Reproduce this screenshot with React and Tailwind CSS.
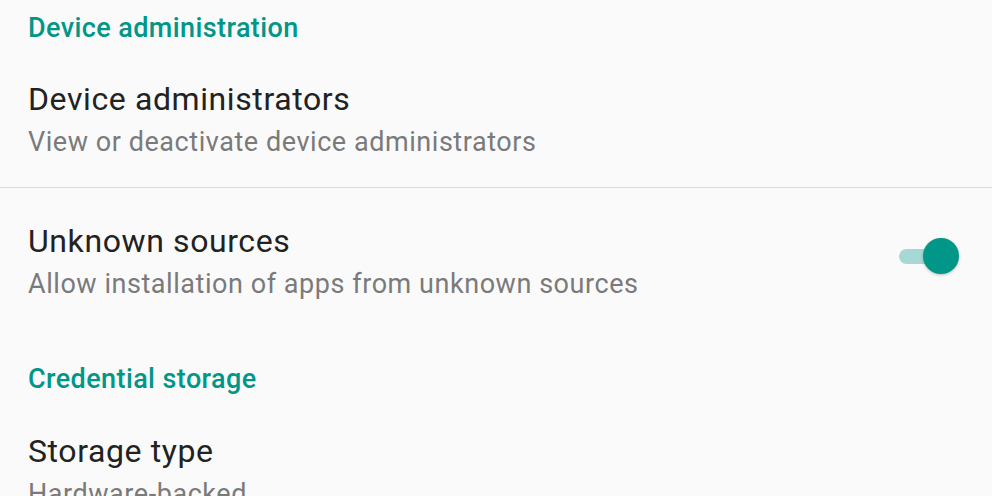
export default function App() {
  return (
    <div className="w-[992px] h-[496px] overflow-hidden bg-[#fafafa] font-['Roboto',sans-serif]">
      <div className="pl-[28px] pt-[12px] h-[32px] leading-[32px] box-content text-[27px] tracking-[0.4px] font-medium text-[#009688]">
        Device administration
      </div>

      <div className="pl-[28px] pt-[33px] pb-[24px]">
        <div className="text-[32px] leading-[44px] tracking-[0.6px] text-[#222222]">Device administrators</div>
        <div className="text-[27px] leading-[42px] tracking-[0.55px] text-[#7a7a7a]">View or deactivate device administrators</div>
      </div>

      <div className="h-px bg-[#dadada]" />

      <div className="flex items-start pl-[28px] pr-[33px] pt-[31px]">
        <div className="flex-1">
          <div className="text-[32px] leading-[44px] tracking-[0.6px] text-[#222222]">Unknown sources</div>
          <div className="text-[27px] leading-[42px] tracking-[0.55px] text-[#7a7a7a]">Allow installation of apps from unknown sources</div>
        </div>
        <div className="relative mt-[19px] w-[60px] h-[36px] flex items-center">
          <div className="h-[15px] w-[54px] rounded-full bg-[#a6d9d4]" />
          <div className="absolute right-0 top-0 w-[36px] h-[36px] rounded-full bg-[#009688] shadow-[0_1px_3px_rgba(0,0,0,0.25)]" />
        </div>
      </div>

      <div className="pl-[28px] pt-[58px] h-[32px] leading-[32px] box-content text-[27px] tracking-[0.4px] font-medium text-[#009688]">
        Credential storage
      </div>

      <div className="pl-[28px] pt-[34px]">
        <div className="text-[32px] leading-[44px] tracking-[0.6px] text-[#222222]">Storage type</div>
        <div className="text-[27px] leading-[42px] tracking-[0.55px] text-[#7a7a7a]">Hardware-backed</div>
      </div>
    </div>
  )
}
